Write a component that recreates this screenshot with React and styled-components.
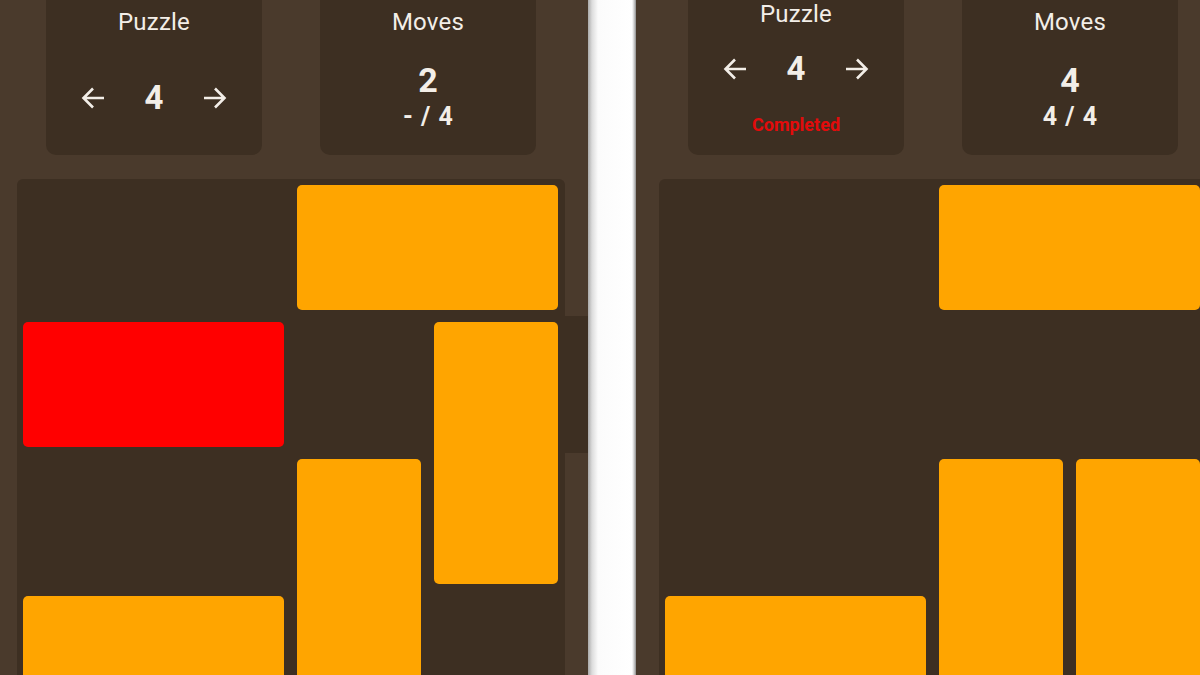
import * as React from 'react';
import styled, { createGlobalStyle } from 'styled-components';

const CELL = 137;

const GlobalStyle = createGlobalStyle`
  html, body {
    margin: 0;
    padding: 0;
    background: #ffffff;
  }
  body {
    font-family: Roboto, "Noto Sans", sans-serif;
  }
`;

const Screen = styled.div`
  display: flex;
  width: 1200px;
  height: 675px;
  overflow: hidden;
`;

const Panel = styled.div`
  box-sizing: border-box;
  flex: ${(p) => (p.$grow ? '1' : `0 0 ${p.$width}px`)};
  height: 100%;
  overflow: hidden;
  background: #4a3a2c;
  padding-left: ${(p) => p.$left}px;
  color: #f3eee8;
`;

const Gutter = styled.div`
  flex: 0 0 48px;
  height: 100%;
  background: linear-gradient(to right, #a9a9a9 0px, #dcdcdc 4px, #fbfbfb 10px, #ffffff 44px, #cfcfcf 46px, #8d8d8d 48px);
`;

const Header = styled.div`
  display: grid;
  grid-template-columns: ${CELL * 2}px ${CELL * 2}px;
  justify-items: center;
  width: ${CELL * 4}px;
`;

const Card = styled.div`
  box-sizing: border-box;
  width: 216px;
  height: 155px;
  display: flex;
  flex-direction: column;
  align-items: center;
  background: #3d2f22;
  border-radius: 0 0 10px 10px;
  padding-top: ${(p) => p.$top}px;
`;

const Title = styled.div`
  font-size: 24px;
  line-height: 28px;
  letter-spacing: 0.2px;
`;

const NavRow = styled.div`
  display: flex;
  align-items: center;
  gap: 40px;
  margin-top: ${(p) => p.$gap}px;
  height: 36px;
`;

const Number = styled.div`
  font-size: 33px;
  font-weight: 700;
  line-height: 36px;
`;

const ArrowButton = styled.button`
  display: flex;
  padding: 0;
  border: none;
  background: transparent;
  color: #f3eee8;
`;

const Status = styled.div`
  margin-top: 27px;
  color: #e30b0b;
  font-size: 18px;
  font-weight: 700;
  line-height: 22px;
`;

const MovesValue = styled.div`
  margin-top: 25px;
  font-size: 34px;
  font-weight: 700;
  line-height: 38px;
`;

const MovesBest = styled.div`
  margin-top: 4px;
  font-size: 25px;
  font-weight: 700;
  line-height: 28px;
  word-spacing: 2px;
`;

const BoardRow = styled.div`
  display: flex;
  margin-top: 24px;
`;

const Board = styled.div`
  flex: 0 0 auto;
  display: grid;
  grid-template-columns: repeat(4, ${CELL}px);
  grid-template-rows: repeat(4, ${CELL}px);
  background: #3d2f22;
  border-radius: 6px;
`;

const Exit = styled.div`
  flex: 0 0 24px;
  height: ${CELL}px;
  margin-top: ${CELL}px;
  background: #3d2f22;
`;

const Block = styled.div`
  grid-column: ${(p) => p.$col + 1} / span ${(p) => p.$w};
  grid-row: ${(p) => p.$row + 1} / span ${(p) => p.$h};
  margin: 6px 7px 6px 6px;
  border-radius: 5px;
  background: ${(p) => (p.$target ? '#ff0000' : '#ffa500')};
`;

function Arrow({ dir }) {
  return (
    <svg width="24" height="24" viewBox="0 0 24 24" fill="none" stroke="currentColor"
      strokeWidth="2.6" strokeLinejoin="miter"
      style={dir === 'right' ? { transform: 'scaleX(-1)' } : undefined}>
      <path d="M23 12H2.5M12 2.5L2.5 12l9.5 9.5" />
    </svg>
  );
}

function PuzzleCard({ number, completed }) {
  return (
    <Card $top={completed ? 0 : 8}>
      <Title>Puzzle</Title>
      <NavRow $gap={completed ? 23 : 44}>
        <ArrowButton type="button"><Arrow dir="left" /></ArrowButton>
        <Number>{number}</Number>
        <ArrowButton type="button"><Arrow dir="right" /></ArrowButton>
      </NavRow>
      {completed && <Status>Completed</Status>}
    </Card>
  );
}

function MovesCard({ moves, best }) {
  return (
    <Card $top={8}>
      <Title>Moves</Title>
      <MovesValue>{moves}</MovesValue>
      <MovesBest>{best}</MovesBest>
    </Card>
  );
}

const startBlocks = [
  { col: 2, row: 0, w: 2, h: 1 },
  { col: 0, row: 1, w: 2, h: 1, target: true },
  { col: 3, row: 1, w: 1, h: 2 },
  { col: 2, row: 2, w: 1, h: 2 },
  { col: 0, row: 3, w: 2, h: 1 },
];

const doneBlocks = [
  { col: 2, row: 0, w: 2, h: 1 },
  { col: 2, row: 2, w: 1, h: 2 },
  { col: 3, row: 2, w: 1, h: 2 },
  { col: 0, row: 3, w: 2, h: 1 },
];

function GameScreen({ blocks, moves, best, completed, showExit }) {
  return (
    <>
      <Header>
        <PuzzleCard number={4} completed={completed} />
        <MovesCard moves={moves} best={best} />
      </Header>
      <BoardRow>
        <Board>
          {blocks.map((b, i) => (
            <Block key={i} $col={b.col} $row={b.row} $w={b.w} $h={b.h} $target={b.target} />
          ))}
        </Board>
        {showExit && <Exit />}
      </BoardRow>
    </>
  );
}

export default function App() {
  return (
    <>
      <GlobalStyle />
      <Screen>
        <Panel $width={588} $left={17}>
          <GameScreen blocks={startBlocks} moves={2} best="- / 4" showExit />
        </Panel>
        <Gutter />
        <Panel $grow $left={23}>
          <GameScreen blocks={doneBlocks} moves={4} best="4 / 4" completed />
        </Panel>
      </Screen>
    </>
  );
}
